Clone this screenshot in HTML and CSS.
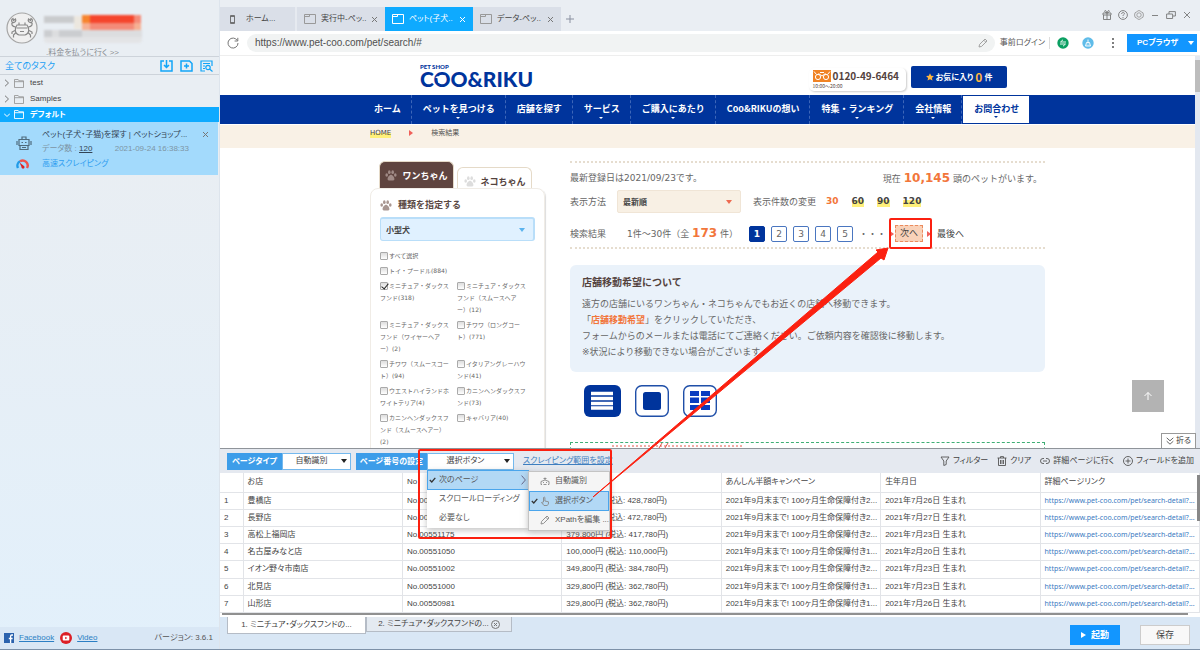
FILE: index.html
```html
<!DOCTYPE html>
<html lang="ja">
<head>
<meta charset="utf-8">
<title>ペット(子犬・子猫)を探す</title>
<link rel="stylesheet" href="styles.css">
</head>
<body>
<svg class="defs" aria-hidden="true">
  <symbol id="folder" viewBox="0 0 11 10"><path d="M.5 9.500V.5h4l1 1.500h5v7.500z M.5 3h10" fill="none" stroke="currentColor"/></symbol>
  <symbol id="window" viewBox="0 0 12 10"><path d="M.5.5h11v9H.5z M1 2.500h4.500V1" fill="none" stroke="currentColor"/></symbol>
  <symbol id="close" viewBox="0 0 7 7"><path d="M1 1l5 5M6 1L1 6" fill="none" stroke="currentColor"/></symbol>
  <symbol id="paw" viewBox="0 0 12 11"><g fill="currentColor"><ellipse cx="1.700" cy="5" rx="1.300" ry="1.700"/><ellipse cx="4.300" cy="2.200" rx="1.300" ry="1.900"/><ellipse cx="7.700" cy="2.200" rx="1.300" ry="1.900"/><ellipse cx="10.300" cy="5" rx="1.300" ry="1.700"/><path d="M6 4.800c1.600 0 3.600 2.600 3.400 4.400-.2 1.700-2 1.300-3.400 1.300s-3.200.4-3.400-1.300C2.400 7.400 4.400 4.800 6 4.800z"/></g></symbol>
  <symbol id="pencil" viewBox="0 0 10 10"><path d="M1 9l.6-2.600L7 1l2 2-5.400 5.400zM5.800 2.200l2 2" fill="none" stroke="currentColor" stroke-width=".9"/></symbol>
  <symbol id="check" viewBox="0 0 7 6"><path d="M.8 3l2 2L6.300.9" fill="none" stroke="currentColor" stroke-width="1.300"/></symbol>
</svg>
<div class="app">
  <aside class="sidebar">
    <header class="account">
      <svg class="avatar" viewBox="0 0 32 32" fill="none" stroke="#888" stroke-width="1.200"><circle cx="16" cy="16" r="15" fill="#f0f0f0" stroke="#a5a5a5"/><path d="M11 13h10c3 4 2 9-2 10h-6c-4-1-5-6-2-10zM10.500 16h11M13 13v-2.500M19 13v-2.500M14 19.500h4M9.500 15C6 14.500 5 12 6.500 10.500M22.500 15c3.500-.5 4.500-3 3-4.500M6.500 10.500C5 9 5.500 7 7 6.500l.5 2 2-1.500c1 2-.5 4-3 3.500zM25.500 10.500C27 9 26.500 7 25 6.500l-.5 2-2-1.500c-1 2 .5 4 3 3.500zM9 18.500l-3 1.500v2M9.500 21l-2 2v2.500M23 18.500l3 1.500v2M22.500 21l2 2v2.500"/></svg>
      <div class="account-info">
        <svg class="mosaic" viewBox="0 0 98 28"><path fill="#c9cbcd" d="M0 1h30v7H0z"/><path fill="#ece7df" d="M30 1h8v13h-8z"/><path fill="#f7842e" d="M38 0h8v8h-8z"/><path fill="#f5452c" d="M46 0h44v8H46z"/><path fill="#f48b78" d="M90 0h7v8h-7zM46 8h44v7H46z"/><path fill="#f6b093" d="M38 8h8v7h-8zM90 8h7v7h-7z"/><path fill="#dcdddf" d="M0 15h98v7H0z"/><path fill="#cbcdd0" d="M0 15h8v7H0zM15 15h23v7H15z"/><path fill="#e3e4e6" d="M0 22h98v4q-1 2-4 2H4q-3 0-4-2z"/></svg>
        <a class="pay" href="#">.料金を払うに行く &gt;&gt;</a>
      </div>
    </header>
    <div class="task-head">
      <span>全てのタスク</span>
      <svg viewBox="0 0 13 12" fill="none" stroke="#12a5f8" stroke-width="1.500"><path d="M4 1H1v10h11V1H9M6.500 0v7M4 5l2.500 2.500L9 5"/></svg>
      <svg viewBox="0 0 13 12" fill="none" stroke="#12a5f8" stroke-width="1.500"><path d="M1 1h8.500L12 3.500V11H1zM6.500 3.500v5M4 6h5"/></svg>
      <svg viewBox="0 0 13 12" fill="none" stroke="#12a5f8" stroke-width="1.200"><path d="M5 11H1V1h11v5M3 3.500h7M3 6h2M3 8.500h2"/><circle cx="8" cy="7.500" r="2.200"/><path d="M9.500 9l3 2.500"/></svg>
    </div>
    <nav class="tree">
      <div class="node"><svg class="chev" viewBox="0 0 6 8"><path d="M1 .7L4.500 4 1 7.300"/></svg><svg class="fold"><use href="#folder"/></svg>test</div>
      <div class="node"><svg class="chev" viewBox="0 0 6 8"><path d="M1 .7L4.500 4 1 7.300"/></svg><svg class="fold"><use href="#folder"/></svg>Samples</div>
      <div class="node active"><svg class="chev" viewBox="0 0 6 8"><path d="M0 2.500L3 5.500 6 2.500"/></svg><svg class="fold"><use href="#folder"/></svg>デフォルト</div>
    </nav>
    <article class="task">
      <svg class="robot" viewBox="0 0 16 16" fill="none" stroke="#4f6b7c" stroke-width="1.200"><path d="M3 4.500h10v6H3zM6 4V2h4v2M1 6v4M15 6v4M4 10.500v4h8v-4M6 12.500h4"/><path d="M5.500 7.500h1.500M9 7.500h1.500"/></svg>
      <div class="task-title"><span>ペット(子犬・子猫)を探す | ペットショップ...</span><svg class="x"><use href="#close"/></svg></div>
      <div class="task-meta"><span>データ数 : <u>120</u></span><span>2021-09-24 16:38:33</span></div>
      <svg class="gauge" viewBox="0 0 13 10"><path d="M2 9A5 5 0 0 1 4 2.300" fill="none" stroke="#209be8" stroke-width="2.400"/><path d="M4 2.300A5 5 0 0 1 11 9" fill="none" stroke="#f0524a" stroke-width="2.400"/><path d="M3.500 3.500l4.500 3.500a1.500 1.500 0 1 1-2.500 1z" fill="#d22"/></svg>
      <a class="fast" href="#">高速スクレイピング</a>
    </article>
    <footer class="side-foot">
      <svg class="fb" viewBox="0 0 10 10"><path fill="#2b62ad" d="M0 0h10v10H0z"/><path d="M9 2H7.800q-1.200 0-1.200 1.200V10M4.800 5.500h3.800" fill="none" stroke="#fff" stroke-width="1.300"/></svg>
      <a href="#">Facebook</a>
      <svg class="yt" viewBox="0 0 12 12"><circle cx="6" cy="6" r="6" fill="#dc1f26"/><rect x="2.700" y="3.600" width="6.600" height="4.800" rx="1" fill="#fff"/><path fill="#dc1f26" d="M5.200 4.700v2.600L7.400 6z"/></svg>
      <a href="#">Video</a>
      <span class="version">バージョン: 3.6.1</span>
    </footer>
  </aside>

  <main class="main">
    <header class="titlebar">
      <div class="tabs">
        <div class="tab home"><svg class="phone" viewBox="0 0 7 9"><path d="M1.500.5h4v8h-4zM1.500 1.500h4M1.500 7.500h4" fill="none" stroke="#666" stroke-width=".9"/></svg><span>ホーム...</span></div>
        <div class="tab"><svg class="win"><use href="#window"/></svg><span>実行中-ペッ..</span><svg class="x"><use href="#close"/></svg></div>
        <div class="tab active"><svg class="win"><use href="#window"/></svg><span>ペット(子犬..</span><svg class="x"><use href="#close"/></svg></div>
        <div class="tab"><svg class="win"><use href="#window"/></svg><span>データ-ペッ..</span><svg class="x"><use href="#close"/></svg></div>
        <button class="add" aria-label="新しいタブ"><svg viewBox="0 0 8 8"><path d="M4 0v8M0 4h8" stroke="#8a90a0"/></svg></button>
      </div>
      <div class="win-tools">
        <svg viewBox="0 0 10 10"><path d="M1 3h8v2H1zM1.500 5v4.500h7V5M5 3v6.500M5 3C3 3 2 .7 3.200.6S5 2 5 3c0-1 .6-2.500 1.800-2.400S7 3 5 3"/></svg>
        <svg viewBox="0 0 10 10"><circle cx="5" cy="5" r="4.400"/><path d="M3.600 4c0-2 2.900-1.900 2.800-.3C6.300 4.600 5 4.700 5 6M5 7v1"/></svg>
        <svg viewBox="0 0 10 10" class="dim"><path d="M3.500 1L5 .6 6.500 1l1 1.200 1.500.6.400 2.200-.4 2.200-1.500.6-1 1.200L5 9.400 3.500 9l-1-1.200L1 7.200.6 5 1 2.800l1.500-.6z"/><circle cx="5" cy="5" r="2.200"/></svg>
        <svg viewBox="0 0 10 10"><path d="M2 5.500h6"/></svg>
        <svg viewBox="0 0 10 10"><path d="M.6 4h6v4.500h-6zM3 4V1.600h6.400V6H7"/></svg>
        <svg viewBox="0 0 10 10"><path d="M2 2l6 6M8 2L2 8"/></svg>
      </div>
    </header>

    <div class="address">
      <svg class="reload" viewBox="0 0 12 12"><path d="M10.300 3.500A5 5 0 1 0 11 6M10.800.8v3.200H7.600" fill="none" stroke="#777"/></svg>
      <div class="url"><input type="text" aria-label="URL" value="https://www.pet-coo.com/pet/search/#"><svg class="pen"><use href="#pencil"/></svg></div>
      <span class="login">事前ログイン</span>
      <svg class="round" viewBox="0 0 12 12"><circle cx="6" cy="6" r="5.700" fill="#0b9f62"/><path d="M9 5H3.500L6 2.800M3 7h5.500L6 9.200" fill="none" stroke="#fff" stroke-width=".9"/></svg>
      <svg class="round blue" viewBox="0 0 12 12"><circle cx="6" cy="6" r="5.700" fill="#5fbce9"/><path d="M6 2.500v3M4.500 5.500h3L8.500 9h-5z" fill="#fff3" stroke="#fff" stroke-width=".9"/></svg>
      <svg class="kebab" viewBox="0 0 2 10"><path d="M0 1h2M0 5h2M0 9h2" stroke="#555" stroke-width="1.500"/></svg>
      <button class="pc">PCブラウザ<i class="tri"></i></button>
    </div>

    <section class="browser">
      <div class="page">
        <div class="site-head wrap">
          <div class="logo"><small>PET SHOP</small><strong>COO&amp;RIKU</strong><svg class="dog" viewBox="0 0 12 9"><path fill="#fff" d="M0 2.500L3.500 1l1 1.500h4L11 0l1 1-1.500 3.500.5 4H9.500l-.5-2.500H6L5 9H3.500l.3-4.500L3 4z"/></svg></div>
          <div class="tel"><svg viewBox="0 0 18 12"><path fill="#f08325" d="M0 0h18v12H0z"/><g fill="none" stroke="#fff"><circle cx="5" cy="7" r="2.600"/><circle cx="13" cy="7" r="2.600"/><path d="M1 1.500l2.500 3M17 1.500l-2.500 3M7 2.500l4 0M5.500 3.500L9 6l3.500-2.500"/></g></svg><b>0120-49-6464</b><small>10:00～20:00</small></div>
          <a class="fav" href="#"><svg viewBox="0 0 10 10"><path fill="#ffb640" d="M5 .3l1.500 3.100 3.400.4-2.500 2.300.7 3.400L5 7.800 1.900 9.500l.7-3.400L.1 3.800l3.400-.4z"/></svg>お気に入り <em>0</em> 件</a>
        </div>
        <nav class="site-nav"><ul>
          <li><a href="#">ホーム</a></li>
          <li class="more"><a href="#">ペットを見つける</a></li>
          <li><a href="#">店舗を探す</a></li>
          <li class="more"><a href="#">サービス</a></li>
          <li class="more"><a href="#">ご購入にあたり</a></li>
          <li><a href="#">Coo&amp;RIKUの想い</a></li>
          <li class="more"><a href="#">特集・ランキング</a></li>
          <li class="more"><a href="#">会社情報</a></li>
          <li class="more current"><a href="#">お問合わせ</a></li>
        </ul></nav>
        <div class="crumbs"><div class="wrap"><a href="#">HOME</a><i class="rtri"></i><span>検索結果</span></div></div>

        <div class="wrap cols">
          <aside class="filter">
            <div class="pet-tabs"><button class="dogs"><svg><use href="#paw"/></svg>ワンちゃん</button><button class="cats"><svg><use href="#paw"/></svg>ネコちゃん</button></div>
            <div class="panel">
              <h2><svg><use href="#paw"/></svg>種類を指定する</h2>
              <div class="pick size"><select aria-label="種類"><option>小型犬</option></select><i class="tri"></i></div>
              <div class="breeds">
                <label class="full"><input type="checkbox">すべて選択</label>
                <label class="full"><input type="checkbox">トイ・プードル(884)</label>
                <label><input type="checkbox" checked>ミニチュア・ダックス<br>フンド(318)</label>
                <label><input type="checkbox">ミニチュア・ダックス<br>フンド（スムースヘア<br>ー）(12)</label>
                <label><input type="checkbox">ミニチュア・ダックス<br>フンド（ワイヤーヘア<br>ー）(2)</label>
                <label><input type="checkbox">チワワ（ロングコー<br>ト）(771)</label>
                <label><input type="checkbox">チワワ（スムースコー<br>ト）(94)</label>
                <label><input type="checkbox">イタリアングレーハウ<br>ンド(41)</label>
                <label><input type="checkbox">ウエストハイランドホ<br>ワイトテリア(4)</label>
                <label><input type="checkbox">カニンヘンダックスフ<br>ンド(73)</label>
                <label><input type="checkbox">カニンヘンダックスフ<br>ンド（スムースヘアー）<br>(2)</label>
                <label><input type="checkbox">キャバリア(40)</label>
              </div>
            </div>
          </aside>
          <div class="results">
            <div class="summary">
              <div class="row between"><span>最新登録日は2021/09/23です。</span><span class="total">現在 <b>10,145</b> 頭のペットがいます。</span></div>
              <div class="row order"><label for="order">表示方法</label><div class="pick sort"><select id="order"><option>最新順</option></select><i class="tri"></i></div><span class="count">表示件数の変更</span><a class="on" href="#">30</a><a href="#">60</a><a href="#">90</a><a href="#">120</a></div>
              <div class="row pager"><span class="lead">検索結果</span><span class="range">1件～30件（全 <b>173</b> 件）</span>
                <a class="num on" href="#">1</a><a class="num" href="#">2</a><a class="num" href="#">3</a><a class="num" href="#">4</a><a class="num" href="#">5</a><span class="dots">・・・</span><i class="rtri"></i><a class="next" href="#">次へ</a><i class="rtri"></i><a class="last" href="#">最後へ</a></div>
            </div>
            <section class="notice">
              <h2>店舗移動希望について</h2>
              <p>遠方の店舗にいるワンちゃん・ネコちゃんでもお近くの店舗へ移動できます。<br>「<b>店舗移動希望</b>」をクリックしていただき、<br>フォームからのメールまたは電話にてご連絡ください。ご依頼内容を確認後に移動します。<br>※状況により移動できない場合がございます。</p>
            </section>
            <div class="views">
              <button aria-label="リスト"><svg viewBox="0 0 37 32"><rect width="37" height="32" rx="6" fill="#00349c"/><path d="M7 8.500h22M7 13.500h22M7 18.500h22M7 23h22" stroke="#fff" stroke-width="3.400"/></svg></button>
              <button aria-label="一枚"><svg viewBox="0 0 34 32"><rect x=".7" y=".7" width="32.600" height="30.600" rx="6" fill="#fff" stroke="#1f4fa8" stroke-width="1.400"/><rect x="8" y="7" width="18" height="18" rx="2.500" fill="#00349c"/></svg></button>
              <button aria-label="タイル"><svg viewBox="0 0 34 32"><rect x=".7" y=".7" width="32.600" height="30.600" rx="6" fill="#fff" stroke="#1f4fa8" stroke-width="1.400"/><path fill="#0a3cc0" d="M7 6h9v5H7zM18 6h9v5h-9zM7 12.500h9v5.500H7zM18 12.500h9v5.500h-9zM7 20h9v5H7zM18 20h9v5h-9z"/></svg></button>
            </div>
            <div class="campaign"><svg viewBox="0 0 140 6"><path d="M0 3h132" stroke="#e2574c" stroke-dasharray="2 2"/><path d="M47 5l3-5M53 5l3-5" stroke="#e2574c"/></svg></div>
          </div>
        </div>
      </div>
      <div class="vbar"><i></i></div>
      <button class="to-top" aria-label="上へ"><svg viewBox="0 0 10 10"><path d="M5 9V1.500M1.500 5L5 1.500 8.500 5" fill="none" stroke="#fff"/></svg></button>
      <button class="collapse"><svg viewBox="0 0 8 8"><path d="M.7.8L4 3.800 7.300.8M.7 4.200L4 7.200l3.300-3" fill="none" stroke="#666"/></svg>折る</button>
    </section>

    <div class="toolbar">
      <label class="tag" for="ptype">ページタイプ</label>
      <div class="pick small"><select id="ptype"><option>自動識別</option></select><i class="tri"></i></div>
      <label class="tag second" for="pnum">ページ番号の設定</label>
      <div class="pick small wide"><select id="pnum"><option>選択ボタン</option></select><i class="tri"></i>
        <div class="menu">
          <button class="sel"><svg class="tick"><use href="#check"/></svg>次のページ<svg class="arrow" viewBox="0 0 5 10"><path d="M.6.600L4.400 5 .6 9.400" fill="none" stroke="#668"/></svg></button>
          <button>スクロールローディング</button>
          <button>必要なし</button>
        </div>
        <div class="submenu">
          <button><svg class="ico" viewBox="0 0 10 10"><path d="M2 8.500H1V5.500q4-3 8 0v3H8M3.500 8.500h3M5 4V1.500M3.500 2.500h3M3.500 6v1M6.500 6v1"/></svg>自動識別</button>
          <button class="sel"><svg class="tick"><use href="#check"/></svg><svg class="ico" viewBox="0 0 10 10"><path d="M3.500 6V1.500q.7-1 1.400 0V5l3.600.8Q9 9 7 9.500H4L1.500 6.500q.5-1 2 .5"/></svg>選択ボタン</button>
          <button><svg class="ico"><use href="#pencil"/></svg>XPathを編集 ...</button>
        </div>
      </div>
      <a class="scope" href="#">スクレイピング範囲を設定</a>
      <div class="actions">
        <button><svg viewBox="0 0 10 10"><path d="M1 1h8L6.200 5v3.500L3.800 9.500V5z"/></svg>フィルター</button>
        <button><svg viewBox="0 0 10 10"><path d="M.5 2h9M3.500 2V.6h3V2M1.500 2v7.500h7V2M3.500 4v4M5 4v4M6.500 4v4"/></svg>クリア</button>
        <button><svg viewBox="0 0 10 10"><path d="M4 7.500H3a2.400 2.400 0 0 1 0-5h1M6 2.500h1a2.400 2.400 0 0 1 0 5H6M3 5h4"/></svg>詳細ページに行く</button>
        <button><svg viewBox="0 0 10 10"><circle cx="5" cy="5" r="4.500"/><path d="M5 2.500v5M2.500 5h5"/></svg>フィールドを追加</button>
      </div>
    </div>

    <div class="grid">
      <table>
        <colgroup><col class="idx"><col><col><col><col><col><col></colgroup>
        <thead><tr><th></th><th>お店</th><th>No</th><th></th><th>あんしん半額キャンペーン</th><th>生年月日</th><th>詳細ページリンク</th></tr></thead>
        <tbody>
          <tr><td>1</td><td>豊橋店</td><td>No.00</td><td>(税込: 428,780円)</td><td>2021年9月末まで! 100ヶ月生命保障付き2...</td><td>2021年7月26日 生まれ</td><td><a href="#">https://www.pet-coo.com/pet/search-detail?...</a></td></tr>
          <tr><td>2</td><td>長野店</td><td>No.00</td><td>(税込: 472,780円)</td><td>2021年9月末まで! 100ヶ月生命保障付き2...</td><td>2021年7月27日 生まれ</td><td><a href="#">https://www.pet-coo.com/pet/search-detail?...</a></td></tr>
          <tr><td>3</td><td>高松上福岡店</td><td>No.00551175</td><td>379,800円 (税込: 417,780円)</td><td>2021年9月末まで! 100ヶ月生命保障付き2...</td><td>2021年7月23日 生まれ</td><td><a href="#">https://www.pet-coo.com/pet/search-detail?...</a></td></tr>
          <tr><td>4</td><td>名古屋みなと店</td><td>No.00551050</td><td>100,000円 (税込: 110,000円)</td><td>2021年9月末まで! 100ヶ月生命保障付き1...</td><td>2021年2月20日 生まれ</td><td><a href="#">https://www.pet-coo.com/pet/search-detail?...</a></td></tr>
          <tr><td>5</td><td>イオン野々市南店</td><td>No.00551002</td><td>349,800円 (税込: 384,780円)</td><td>2021年9月末まで! 100ヶ月生命保障付き2...</td><td>2021年7月23日 生まれ</td><td><a href="#">https://www.pet-coo.com/pet/search-detail?...</a></td></tr>
          <tr><td>6</td><td>北見店</td><td>No.00551000</td><td>329,800円 (税込: 362,780円)</td><td>2021年9月末まで! 100ヶ月生命保障付き1...</td><td>2021年7月23日 生まれ</td><td><a href="#">https://www.pet-coo.com/pet/search-detail?...</a></td></tr>
          <tr><td>7</td><td>山形店</td><td>No.00550981</td><td>329,800円 (税込: 362,780円)</td><td>2021年9月末まで! 100ヶ月生命保障付き1...</td><td>2021年7月26日 生まれ</td><td><a href="#">https://www.pet-coo.com/pet/search-detail?...</a></td></tr>
        </tbody>
      </table>
      <i class="v-thumb"></i>
      <i class="h-thumb"></i>
    </div>

    <footer class="bottom">
      <button class="sheet on">1. ミニチュア・ダックスフンドの...</button>
      <button class="sheet">2. ミニチュア・ダックスフンドの...<svg viewBox="0 0 9 9"><circle cx="4.500" cy="4.500" r="4"/><path d="M3 3l3 3M6 3L3 6"/></svg></button>
      <button class="run"><i></i>起動</button>
      <button class="save">保存</button>
    </footer>
  </main>

  <svg class="marks" aria-hidden="true" fill="none" stroke="#fb2010">
    <rect x="419" y="450" width="192" height="88" rx="1" stroke-width="2"/>
    <rect x="890" y="219" width="41" height="29" rx="1" stroke-width="2"/>
    <path d="M593 497L878 252l-2-2 12-2-4 12-3-2z" fill="#fb2010" stroke-width="1"/>
  </svg>
</div>
</body>
</html>
```
FILE: styles.css
```css
* { box-sizing: border-box; }
body {
  margin: 0;
  font: 8px/12px "Liberation Sans", "Noto Sans CJK JP", sans-serif;
  font-feature-settings: "palt";
  color: #444;
}
button, input, select { font: inherit; color: inherit; font-feature-settings: inherit; margin: 0; padding: 0; border: 0; background: none; }
a { color: inherit; text-decoration: none; }
h2, p, ul { margin: 0; padding: 0; }
svg { flex: none; display: block; }
.defs { position: absolute; width: 0; height: 0; }
.app { position: relative; display: grid; grid-template-columns: 220px minmax(0, 1fr); grid-template-rows: minmax(0, 1fr); height: 100vh; overflow: hidden; border-bottom: 1px solid #7d91a8; }
.x { width: 7px; height: 7px; color: #777; }
.tri { width: 0; border: 3px solid transparent; border-top: 4px solid currentColor; border-bottom: 0; }
.rtri { width: 0; border: 3px solid transparent; border-left: 4px solid #f0605a; border-right: 0; }

/* sidebar */
.sidebar { display: flex; flex-direction: column; background: linear-gradient(#e9eef3 170px, #e2f0fb); border-right: 1px solid #dde4ec; min-height: 0; }
.account { display: flex; gap: 6px; height: 57px; padding: 12px 6px 0; overflow: hidden; border-bottom: 1px solid #cdd3da; }
.avatar { width: 32px; height: 32px; }
.mosaic { width: 98px; height: 28px; margin-top: 3px; filter: blur(1px); }
.pay { display: block; padding-left: 2px; margin-top: 4px; color: #8b8f94; }
.task-head { display: flex; align-items: center; gap: 7px; height: 18px; padding: 0 5px; border-bottom: 1px solid #cdd3da; color: #1b9ff3; font-size: 9px; }
.task-head span { flex: 1; }
.task-head svg { width: 13px; height: 12px; }
.task-head svg:last-child { margin-right: 1px; }
.node { display: flex; align-items: center; height: 16px; padding-left: 4px; }
.node.active { height: 15px; background: #0eaaff; color: #fff; font-weight: bold; }
.chev { width: 6px; height: 8px; fill: none; stroke: #777; }
.active .chev { stroke: #fff; }
.fold { width: 10px; height: 9px; margin: 0 6px 0 4px; color: #999; }
.active .fold { color: #fff; }
.task { display: grid; grid-template-columns: 16px 1fr; column-gap: 10px; align-items: center; background: #a3dafc; padding: 4px 9px 4px 16px; height: 53px; margin-right: 1px; grid-template-rows: 17px 12px 18px; }
.robot { width: 16px; height: 16px; grid-row: 1 / 3; margin-top: 5px; }
.task-title { display: flex; align-items: center; gap: 8px; justify-content: space-between; white-space: nowrap; color: #345; }
.task-title span { overflow: hidden; }
.task-meta { display: flex; justify-content: space-between; padding-right: 20px; color: #7d95a5; }
.task-meta u { color: #345; }
.gauge { width: 13px; height: 10px; }
.fast { color: #2f9df0; }
.side-foot { display: flex; align-items: center; height: 22px; margin-top: auto; padding: 0 6px 0 4px; background: #d9e7f5; color: #555; }
.side-foot a { color: #2b7fc4; text-decoration: underline; margin: 0 6px 0 5px; }
.fb { width: 10px; height: 10px; }
.yt { width: 12px; height: 12px; }
.version { margin-left: auto; }

/* window chrome */
.main { display: grid; grid-template-rows: 31px 25px minmax(0, 1fr) 24px 144px 32px; grid-template-columns: minmax(0, 1fr); min-width: 0; }
.titlebar { display: flex; justify-content: space-between; background: #eaeef3; }
.tabs { display: flex; align-self: flex-end; height: 24px; }
.tab { display: flex; align-items: center; width: 88px; padding: 0 7px; background: #dadfe8; white-space: nowrap; }
.tab span { flex: 1; padding-left: 5px; }
.tab.home { width: 77px; padding-left: 9px; border-right: 2px solid #e6eaf0; }
.home span { padding-left: 10px; }
.tab.active { background: #0eaaff; color: #fff; }
.win { width: 12px; height: 10px; color: #999; }
.tab.active .x, .tab.active .win { color: #fff; }
.phone { width: 7px; height: 9px; }
.add { width: 18px; display: grid; place-items: center; }
.add svg { width: 8px; height: 8px; }
.win-tools { display: flex; gap: 6px; padding: 10px 8px 0 0; }
.win-tools svg { width: 10px; height: 10px; fill: none; stroke: #777; stroke-width: .9; }
.win-tools .dim { stroke: #999; }
.address { display: flex; align-items: center; padding: 0 3px 0 7px; background: #fff; border-bottom: 1px solid #eee; }
.reload { width: 12px; height: 12px; }
.url { display: flex; align-items: center; flex: 1; height: 18px; margin: 0 5px 0 8px; padding: 0 7px 0 8px; border-radius: 9px; background: #f1f3f3; }
.url input { flex: 1; font-size: 10px; color: #505050; font-family: "Liberation Sans", sans-serif; }
.pen { width: 10px; height: 10px; color: #999; }
.login { color: #555; padding-right: 4px; border-right: 1px solid #ddd; margin-right: 7px; }
.round { width: 12px; height: 12px; margin-right: 13px; }
.kebab { width: 2px; height: 10px; margin: 0 13px 0 5px; }
.pc { display: flex; align-items: center; justify-content: space-between; width: 70px; height: 18px; padding: 0 3px 0 10px; background: #1296ff; color: #fff; font-weight: bold; }

/* embedded site */
.browser { position: relative; display: flex; overflow: hidden; border-bottom: 1px solid #8f949a; background: #fff; min-height: 0; }
.page { flex: 1; font-family: "DejaVu Sans", "Noto Sans CJK JP", sans-serif; font-size: 9px; line-height: 16px; color: #666; font-feature-settings: normal; }
.vbar { width: 5px; background: #e3e8f0; padding-top: 4px; }
.vbar i { display: block; height: 32px; background: #bdbdbd; }
.wrap { max-width: 675px; margin: 0 auto; }
.site-head { display: flex; align-items: flex-start; height: 39px; padding: 8px 38px 0 50px; }
.logo { position: relative; color: #00349c; font-family: Lato, sans-serif; margin-right: auto; }
.logo small { display: block; font-size: 6px; font-weight: 900; line-height: 6px; }
.logo strong { display: block; font-size: 21px; font-weight: 900; line-height: 18px; }
.dog { position: absolute; left: 15px; top: 11px; width: 11px; height: 8px; }
.tel { display: grid; grid-template-columns: 18px auto; column-gap: 2px; margin: 4px 5px 0 0; padding: 2px 7px 2px 4px; border-radius: 5px; box-shadow: 1px 1px 2px #ccc; color: #54433e; font-family: "Noto Sans CJK JP", sans-serif; }
.tel svg { width: 18px; height: 12px; }
.tel b { font-size: 10px; line-height: 12px; }
.tel small { grid-column: 1 / 3; font-size: 5px; line-height: 7px; }
.fav { display: flex; align-items: center; justify-content: center; gap: 2px; width: 96px; height: 22px; margin-top: 2px; border-radius: 2px; background: #00349c; color: #fff; font: bold 8px/12px "Noto Sans CJK JP", sans-serif; font-feature-settings: "palt"; }
.fav svg { width: 8px; height: 8px; }
.fav em { color: #ffb640; font-style: normal; font-size: 12px; }
.site-nav { background: #00349c; color: #fff; font-family: "Noto Sans CJK JP", sans-serif; font-weight: bold; }
.site-nav ul { display: flex; max-width: 691px; margin: 0 auto; padding-left: 1px; list-style: none; }
.site-nav li { position: relative; height: 29px; padding: 0 10px 0 11px; line-height: 28px; border-right: 1px dashed #3d66b8; white-space: nowrap; }
.more::after { content: ""; position: absolute; left: calc(50% - 2px); bottom: 5px; border: 2px solid transparent; border-top-color: currentColor; border-bottom: 0; }
.site-nav .current { background: #fff; color: #00349c; border: 1px solid #00349c; line-height: 26px; }
.crumbs { height: 24px; border-top: 1px solid #fff; background: #f9f1e6; font-size: 7px; }
.crumbs .wrap { display: flex; align-items: center; color: #555; }
.crumbs a { line-height: 9px; background: linear-gradient(transparent 40%, #fff07a 40%); color: #444; }
.crumbs .rtri { margin: 0 18px; }
.cols { display: grid; grid-template-columns: 175px minmax(0, 1fr); gap: 25px; padding-top: 13px; }
.pet-tabs { display: flex; align-items: flex-end; gap: 3px; height: 27px; padding-left: 9px; }
.pet-tabs button { display: flex; align-items: center; justify-content: center; gap: 5px; width: 75px; border-radius: 6px 6px 0 0; font: bold 9px/21px "Noto Sans CJK JP", sans-serif; height: 21px; color: #54433e; background: #fff; border: 1px solid #e5dac8; border-bottom: 0; padding-top: 6px; }
.pet-tabs svg { width: 12px; height: 11px; color: #ddd; }
.pet-tabs .dogs { height: 27px; padding-top: 0; background: #5f443f; color: #fff; }
.pet-tabs .dogs svg { color: #a08a86; }
.panel { padding: 8px 9px; border: 1px solid #f0ece6; border-radius: 8px; box-shadow: 1px 1px 1px #ddd; }
.panel h2 { display: flex; align-items: center; gap: 6px; font: bold 9px/16px "Noto Sans CJK JP", sans-serif; color: #5a4843; }
.panel h2 svg { width: 12px; height: 11px; color: #a89691; }
.pick { position: relative; }
.pick select { width: 100%; height: 100%; appearance: none; display: block; }
.pick .tri { position: absolute; right: 8px; top: calc(50% - 2px); pointer-events: none; }
.size { height: 24px; margin-top: 4px; background: #e0f1ff; border: 1px solid #b9def9; border-width: 2px 2px 1px 1px; border-radius: 3px; color: #5ab3ee; }
.size select, .sort select { padding-left: 5px; color: #444; font-family: "Noto Sans CJK JP", sans-serif; font-weight: bold; font-size: 8px; }
.breeds { display: grid; grid-template-columns: 77px 1fr; row-gap: 3px; margin-top: 9px; font-size: 6px; line-height: 12px; white-space: nowrap; }
.breeds .full { grid-column: 1 / 3; }
.breeds input { appearance: none; width: 8px; height: 8px; margin-right: 1px; border: 1px solid #aaa; border-radius: 1px; background: linear-gradient(#ddd, #fff); vertical-align: middle; }
.breeds label { position: relative; }
.breeds input:checked::after { content: ""; position: absolute; left: 3px; top: 2px; width: 3px; height: 6px; border: solid #222; border-width: 0 1px 1px 0; transform: rotate(40deg); }
.summary { border: dotted #e6ddcf; border-width: 2px 0; padding: 4px 0 5px; }
.row { display: flex; align-items: center; white-space: nowrap; }
.between { justify-content: space-between; height: 22px; padding-right: 3px; margin-bottom: 1px; }
.summary b { font-size: 12px; color: #f2763a; }
.order label { width: 47px; }
.sort { width: 124px; height: 23px; margin-right: 12px; background: #f8f0e4; border: 1px solid #f0e5d6; border-radius: 2px; color: #ee6a50; }
.order a { margin-left: 13px; font-weight: bold; line-height: 11px; color: #444; background: linear-gradient(transparent 40%, #fff07a 40%); }
.order .count + a { margin-left: 10px; }
.order .on { color: #f2763a; background: none; }
.pager { height: 17px; margin-top: 12px; }
.lead { width: 57px; }
.range { width: 122px; }
.num { width: 16px; height: 16px; margin-right: 6px; border: 1px solid #4a76c0; border-radius: 2px; text-align: center; line-height: 14px; }
.num.on { background: #00349c; border-color: #00349c; color: #fff; font-weight: bold; }
.dots { margin-right: 4px; }
.next { width: 28px; margin: 0 4px 0 1px; line-height: 15px; border: 1px dashed #eb8b5d; background: #f9d2b9; text-align: center; color: #444; }
.last { margin-left: 6px; color: #444; }
.notice { margin-top: 16px; padding: 10px 12px 12px; border-radius: 6px; background: #eaf2fa; }
.notice h2 { font-size: 10px; line-height: 16px; margin-bottom: 5px; color: #54433e; }
.notice b { color: #f2763a; }
.views { display: flex; gap: 14px; padding: 13px 14px 0; }
.views svg { height: 32px; }
.campaign { margin-top: 25px; height: 40px; border: 1px dashed #3fae75; }
.campaign svg { width: 140px; height: 6px; margin-left: 41px; }
.to-top { position: absolute; right: 36px; bottom: 36px; width: 32px; height: 32px; background: #b3b3b3; display: grid; place-items: center; }
.to-top svg { width: 10px; height: 10px; }
.collapse { position: absolute; right: 4px; bottom: 0; display: flex; align-items: center; justify-content: center; gap: 2px; width: 35px; height: 15px; background: #fff; border: 1px solid #999; border-bottom: 0; }
.collapse svg { width: 8px; height: 8px; }

/* extraction toolbar */
.toolbar { display: flex; align-items: center; padding: 0 6px 0 7px; background: #e5e9f0; white-space: nowrap; }
.tag { height: 17px; width: 55px; line-height: 17px; text-align: center; background: #3d9de9; color: #fff; font-weight: bold; }
.second { width: 71px; margin-left: 5px; }
.small { width: 69px; height: 17px; border: 1px solid #74b9ee; background: #fff; }
.small.wide { width: 87px; }
.small select { padding-right: 10px; text-align-last: center; }
.small .tri { right: 3px; color: #222; }
.scope { margin-left: 9px; color: #3f7fc0; text-decoration: underline; }
.actions { display: flex; gap: 9px; margin-left: auto; }
.actions button { display: flex; align-items: center; gap: 3px; }
.actions svg { width: 10px; height: 10px; fill: none; stroke: #555; stroke-width: .9; }
.menu, .submenu { position: absolute; z-index: 2; top: 16px; left: -1px; width: 102px; background: #fff; box-shadow: 0 2px 6px #8888; }
.menu button, .submenu button { position: relative; display: flex; align-items: center; width: 100%; height: 19px; padding-left: 11px; border: 1px solid transparent; white-space: nowrap; color: #555; }
.submenu { left: 100px; top: 17px; width: 82px; background: #f5f5f5; border: 1px solid #c4c4c4; }
.submenu button { padding-left: 10px; gap: 5px; }
.menu .sel, .submenu .sel { height: 20px; background: #b2d8f5; border-color: #4aa5ec; }
.tick { position: absolute; left: 1px; width: 7px; height: 6px; color: #333; }
.arrow { position: absolute; right: 2px; width: 5px; height: 10px; }
.ico { width: 10px; height: 10px; fill: none; stroke: #888; stroke-width: .9; color: #888; }

/* data grid */
.grid { position: relative; background: #fff; overflow: hidden; padding-bottom: 4px; }
table { width: 100%; height: 100%; table-layout: fixed; border-collapse: collapse; }
thead tr { height: 19px; }
.idx { width: 23px; }
th, td { padding: 0 0 0 4px; text-align: left; font-weight: normal; white-space: nowrap; overflow: hidden; border: 1px solid #e2e4e8; border-left: 0; border-top: 0; line-height: 12px; }
tr:nth-child(-n+2) td:nth-child(4) { padding-left: 42px; }
td a { color: #3a7abf; font-family: "Noto Sans", sans-serif; font-size: 7px; }
.v-thumb { position: absolute; right: 0; top: 2px; width: 3px; height: 46px; background: #888; }
.h-thumb { position: absolute; left: 2px; right: 12px; bottom: 2px; height: 2px; background: #909090; }
.bottom { display: flex; align-items: flex-start; padding: 0 10px 0 7px; background: #d9e7f5; }
.sheet { display: flex; align-items: center; justify-content: center; gap: 2px; height: 15px; width: 146px; background: #e4eaf1; border: 1px solid #b5bcc6; border-top: 0; white-space: nowrap; }
.sheet.on { width: 139px; height: 17px; background: #fff; }
.sheet svg { width: 9px; height: 9px; fill: none; stroke: #777; stroke-width: 1; }
.run, .save { width: 50px; height: 20px; margin-top: 8px; font-size: 9px; }
.run { display: flex; align-items: center; justify-content: center; gap: 5px; margin-left: auto; background: #1296ff; color: #fff; font-weight: bold; }
.run i { border: 3px solid transparent; border-left: 5px solid #fff; border-right: 0; }
.save { margin-left: 20px; background: #f8f8f8; border: 1px solid #ccc; }

.marks { position: absolute; z-index: 5; left: 0; top: 0; width: 100%; height: 100%; pointer-events: none; }
```
